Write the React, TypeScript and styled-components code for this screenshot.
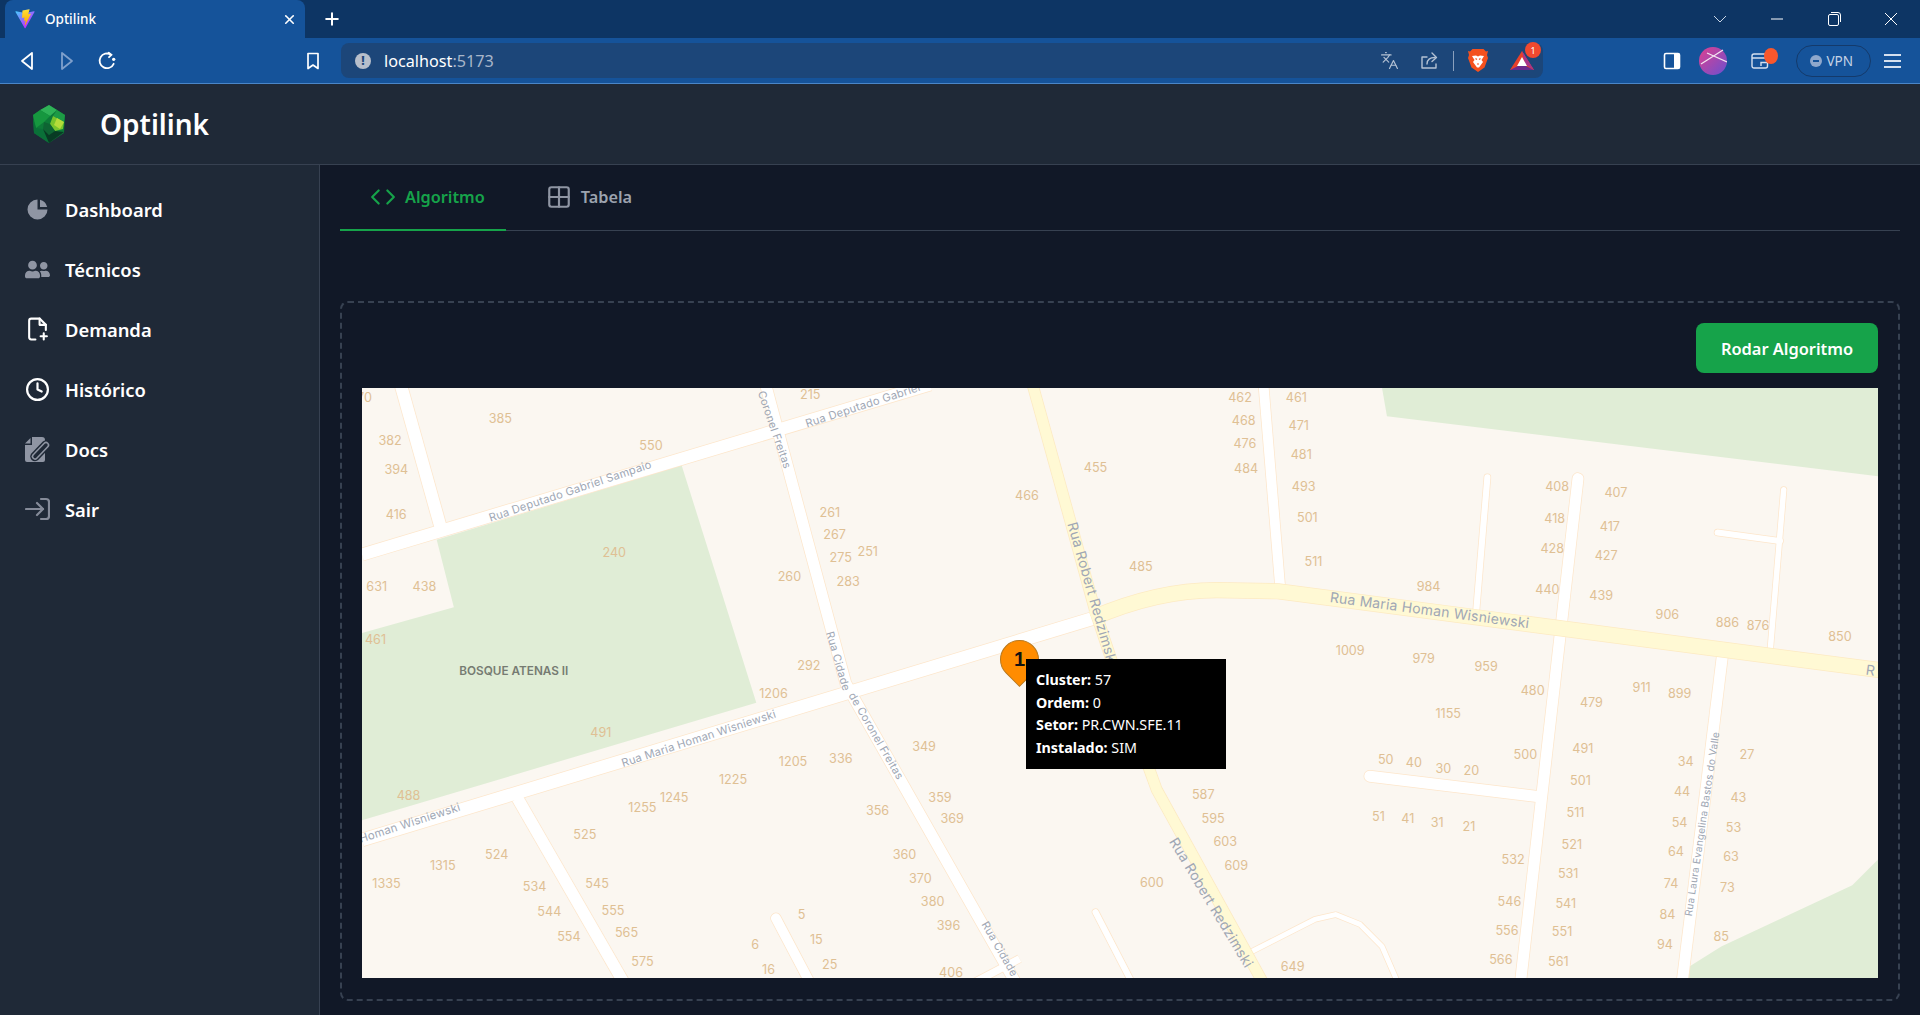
import styled, { createGlobalStyle } from "styled-components";
import { Clock, Code, Grid2x2, Languages, Plus, X } from "lucide-react";
import { FaUserFriends } from "react-icons/fa";
import { HiChartPie } from "react-icons/hi";

const UI_FONT = `"Noto Sans", "Open Sans", "Liberation Sans", sans-serif`;

// map coordinates below are measured on a 1238 x 482 grid
const parks = [
  "357,441 557,380 618,574 296,670 296,517 371,496",
  "1129,317 1133,340 1534,389 1534,317",
  "1534,702 1513,723 1406,773 1379,790 1379,800 1534,800",
];

const whiteRoads = [
  { d: "M296 453 L760 314", w: 10 },
  { d: "M296 686 L900 503", w: 10.5 },
  { d: "M625 312 L691 558 L697 569 L830 803", w: 9 },
  { d: "M327 312 L360 430", w: 10 },
  { d: "M423 652 L510 803", w: 9.5 },
  { d: "M634 750 L662 803", w: 8, round: true },
  { d: "M1032 312 L1046 482", w: 8 },
  { d: "M1215 390 L1206 498", w: 5, round: true },
  { d: "M1289 391 L1242 803", w: 9, round: true },
  { d: "M1457 400 L1446 531", w: 4.5, round: true },
  { d: "M1403 435 L1454 442", w: 5, round: true },
  { d: "M1407 535 L1374 803", w: 9 },
  { d: "M1119 634 L1259 651", w: 9, round: true },
  { d: "M1017 780 L1074 751 L1091 747 L1111 755 L1129 773 L1142 803", w: 4 },
  { d: "M895 745 L925 803", w: 5, round: true },
  { d: "M795 803 L833 783", w: 6 },
];

const yellowRoads = [
  { d: "M843 312 L895 500 L925 590 L945 645 L1032 803", w: 8.5 },
  { d: "M892 505 Q945 482 994 482 L1044 483 L1540 548", w: 12 },
];

const houseNumbers: [string, number, number][] = [
  ["70", 298, 324], ["382", 319, 359], ["385", 409, 341], ["394", 324, 383], ["416", 324, 420],
  ["550", 532, 363], ["215", 662, 322], ["631", 308, 478], ["438", 347, 478], ["240", 502, 451],
  ["461", 307, 522], ["261", 678, 418], ["267", 682, 436], ["275", 687, 455], ["251", 709, 450],
  ["283", 693, 474], ["260", 645, 470], ["292", 661, 543], ["1206", 632, 566], ["466", 839, 404],
  ["455", 895, 381], ["462", 1013, 324], ["461", 1059, 324], ["468", 1016, 343], ["471", 1061, 347],
  ["476", 1017, 362], ["481", 1063, 371], ["484", 1018, 382], ["493", 1065, 397], ["501", 1068, 422],
  ["511", 1073, 458], ["485", 932, 462], ["984", 1167, 478], ["408", 1272, 397], ["407", 1320, 402],
  ["418", 1270, 423], ["417", 1315, 429], ["428", 1268, 447], ["427", 1312, 453], ["440", 1264, 481],
  ["439", 1308, 486], ["906", 1362, 501], ["886", 1411, 508], ["876", 1436, 510], ["850", 1503, 519],
  ["1009", 1103, 531], ["979", 1163, 537], ["959", 1214, 544], ["480", 1252, 563], ["479", 1300, 573],
  ["911", 1341, 561], ["899", 1372, 566], ["1155", 1183, 582], ["349", 755, 609], ["491", 491, 598],
  ["488", 334, 649], ["1205", 648, 621], ["336", 687, 619], ["1225", 599, 636], ["1245", 551, 651],
  ["1255", 525, 659], ["356", 717, 661], ["359", 768, 651], ["369", 778, 668], ["525", 478, 681],
  ["524", 406, 697], ["1315", 362, 706], ["1335", 316, 721], ["534", 437, 723], ["545", 488, 721],
  ["555", 501, 743], ["565", 512, 761], ["544", 449, 744], ["554", 465, 764], ["575", 525, 785],
  ["360", 739, 697], ["370", 752, 717], ["380", 762, 736], ["396", 775, 755], ["406", 777, 794],
  ["5", 655, 746], ["15", 667, 767], ["25", 678, 787], ["6", 617, 771], ["16", 628, 791],
  ["600", 941, 720], ["587", 983, 648], ["595", 991, 668], ["603", 1001, 687], ["609", 1010, 706],
  ["649", 1056, 789], ["50", 1132, 620], ["40", 1155, 622], ["30", 1179, 627], ["20", 1202, 629],
  ["51", 1126, 666], ["41", 1150, 668], ["31", 1174, 671], ["21", 1200, 674], ["500", 1246, 616],
  ["491", 1293, 611], ["501", 1291, 637], ["511", 1287, 663], ["521", 1284, 689], ["531", 1281, 713],
  ["541", 1279, 737], ["551", 1276, 760], ["561", 1273, 785], ["532", 1236, 701], ["546", 1233, 736],
  ["556", 1231, 759], ["566", 1226, 783], ["34", 1377, 621], ["44", 1374, 646], ["54", 1372, 671],
  ["64", 1369, 695], ["74", 1365, 721], ["84", 1362, 746], ["94", 1360, 771], ["27", 1427, 616],
  ["43", 1420, 651], ["53", 1416, 675], ["63", 1414, 699], ["73", 1411, 724], ["85", 1406, 764],
];

const streetNames: [string, number, number, number, number][] = [
  ["Rua Deputado Gabriel Sampaio", 466, 401, -18.5, 9.1],
  ["Rua Deputado Gabriel", 705, 331, -18, 9.1],
  ["Coronel Freitas", 633, 351, 71, 8.9],
  ["Rua Cidade", 685, 540, 74, 8.9],
  ["de Coronel Freitas", 716, 601, 60, 8.9],
  ["Rua Robert Redzimski", 893, 485, 74, 11.4],
  ["Rua Robert Redzimski", 990, 737, 59, 11.4],
  ["Rua Maria Homan Wisniewski", 1168, 498, 7.5, 11.4],
  ["Rua Maria Homan Wisniewski", 571, 603, -18, 9.1],
  ["Homan Wisniewski", 335, 672, -18, 9.3],
  ["Rua Cidade", 817, 775, 60, 8.9],
  ["R", 1528, 547, 8, 11.4],
  ["Rua Laura Evangelina Bastos do Valle", 1390, 673, -81.5, 8.2],
];

const navItems = [
  { label: "Dashboard", icon: <HiChartPie size={29} color="#8f95a3" /> },
  { label: "Técnicos", icon: <FaUserFriends size={27} color="#8f95a3" /> },
  { label: "Demanda", icon: <FilePlusIcon /> },
  { label: "Histórico", icon: <Clock size={27} color="#fff" strokeWidth={2.1} /> },
  { label: "Docs", icon: <DocsIcon /> },
  { label: "Sair", icon: <SignInIcon /> },
];

const tooltipRows = [
  ["Cluster:", "57"],
  ["Ordem:", "0"],
  ["Setor:", "PR.CWN.SFE.11"],
  ["Instalado:", "SIM"],
];

function FilePlusIcon() {
  return (
    <svg width="26" height="26" viewBox="0 0 24 24" fill="none" stroke="#fff" strokeWidth="2" strokeLinecap="round" strokeLinejoin="round">
      <path d="M10 22H6a2 2 0 0 1-2-2V4a2 2 0 0 1 2-2h8l6 6v5" />
      <path d="M14 2v6h6" />
      <path d="M18 16v6M15 19h6" />
    </svg>
  );
}

function DocsIcon() {
  return (
    <svg width="25" height="25" viewBox="0 0 25 25" strokeLinecap="round">
      <path d="M7 0 H17 Q20 0 20 3 V23 Q20 25 18 25 H2 Q0 25 0 23 V8 H7 Z" fill="#8f95a3" />
      <path d="M5.5 1 V6.5 H0 Z" fill="#8f95a3" />
      <path d="M10 19.5 L21 8" stroke="#1f2937" strokeWidth="9.5" />
      <path d="M10 19.5 L21 8" stroke="#8f95a3" strokeWidth="6.5" />
      <path d="M10 19.5 L21 8" stroke="#1f2937" strokeWidth="3.4" />
    </svg>
  );
}

function SignInIcon() {
  return (
    <svg width="25" height="24" viewBox="0 0 25 24" fill="none" stroke="#858b99" strokeWidth="2.2" strokeLinecap="round" strokeLinejoin="round">
      <path d="M1 12 H18" />
      <path d="M12 6 L18 12 L12 18" />
      <path d="M16 2 H21 Q24 2 24 5 V19 Q24 22 21 22 H16" />
    </svg>
  );
}

function ViteIcon() {
  return (
    <svg width="20" height="20" viewBox="0 0 410 404">
      <defs>
        <linearGradient id="viteA" x1="6" y1="33" x2="235" y2="344" gradientUnits="userSpaceOnUse">
          <stop stopColor="#41D1FF" />
          <stop offset="1" stopColor="#BD34FE" />
        </linearGradient>
        <linearGradient id="viteB" x1="194" y1="8" x2="236" y2="292" gradientUnits="userSpaceOnUse">
          <stop stopColor="#FFEA83" />
          <stop offset="0.08" stopColor="#FFDD35" />
          <stop offset="1" stopColor="#FFA800" />
        </linearGradient>
      </defs>
      <path fill="url(#viteA)" d="M399.641 59.5246L215.643 388.545C211.844 395.338 202.084 395.378 198.228 388.618L10.5817 59.5563C6.38087 52.1896 12.6802 43.2665 21.0281 44.7586L205.223 77.6824C206.398 77.8924 207.601 77.8904 208.776 77.6763L389.119 44.8058C397.439 43.2894 403.768 52.1434 399.641 59.5246Z" />
      <path fill="url(#viteB)" d="M292.965 1.5744L156.801 28.2552C154.563 28.6937 152.906 30.5903 152.771 32.8664L144.395 174.33C144.198 177.662 147.258 180.248 150.51 179.498L188.42 170.749C191.967 169.931 195.172 173.055 194.443 176.622L183.18 231.775C182.422 235.487 185.907 238.661 189.532 237.56L212.947 230.446C216.577 229.344 220.065 232.527 219.297 236.242L201.398 322.875C200.278 328.294 207.486 331.249 210.492 326.603L212.5 323.5L323.454 102.072C325.312 98.3645 322.108 94.137 318.036 94.9228L279.014 102.454C275.347 103.161 272.227 99.746 273.262 96.1583L298.731 7.86689C299.767 4.27314 296.636 0.855181 292.965 1.5744Z" />
    </svg>
  );
}

function LogoIcon() {
  return (
    <svg width="32" height="38" viewBox="0 0 32 38">
      <polygon points="16,0 32,10 31,28 16,38 1,28 0,10" fill="#0d7a38" />
      <polygon points="16,0 24,5 17,11 7,5" fill="#2fb257" />
      <polygon points="24,5 32,10 31,17 20,11" fill="#1d9a45" />
      <polygon points="7,5 17,11 11,17 3,23 0,10" fill="#16973f" />
      <polygon points="20,11 31,17 30,24 22,26 17,19" fill="#78c52c" />
      <polygon points="24,13 31,17 27,24 21,20" fill="#b5dc3a" />
      <polygon points="11,17 17,19 22,26 16,30 10,24" fill="#0e6433" />
      <polygon points="0,14 3,23 10,24 16,38 1,28" fill="#0a7038" />
      <polygon points="10,24 16,30 22,26 31,27 16,38" fill="#083b24" />
    </svg>
  );
}

function ArrowIcon({ dim }: { dim?: boolean }) {
  return (
    <svg width="16" height="20" viewBox="0 0 16 20" fill="none" stroke={dim ? "#7fa0cc" : "#fff"} strokeWidth="1.8" strokeLinejoin="round">
      <path d="M13 2 L3 10 L13 18 Z" transform={dim ? "matrix(-1 0 0 1 16 0)" : undefined} />
    </svg>
  );
}

function ReloadIcon() {
  return (
    <svg width="20" height="20" viewBox="0 0 18 18" fill="none" stroke="#fff" strokeWidth="1.6" strokeLinecap="round">
      <path d="M15 11.5 A6.6 6.6 0 1 1 12.5 3.3" />
      <circle cx="15" cy="7.5" r="1.5" fill="#fff" stroke="none" />
      <path d="M10.5 1.5 L13 3.4 L10.8 5.6" />
    </svg>
  );
}

function BookmarkIcon() {
  return (
    <svg width="14" height="18" viewBox="0 0 14 18" fill="none" stroke="#fff" strokeWidth="1.7" strokeLinejoin="round">
      <path d="M2 1.5 H12 V16.5 L7 13 L2 16.5 Z" />
    </svg>
  );
}

function ShareIcon() {
  return (
    <svg width="19" height="19" viewBox="0 0 19 19" fill="none" stroke="#b4c2d4" strokeWidth="1.4" strokeLinecap="round" strokeLinejoin="round">
      <path d="M7 6 H2 V17 H16 V13" />
      <path d="M7 13 C7 8.5 10 6.5 15 6.5" />
      <path d="M12 2 L16.5 6.5 L12 10.5" />
    </svg>
  );
}

function BraveIcon() {
  return (
    <svg width="20" height="23" viewBox="0 0 20 23">
      <path d="M4.5 0 H15.5 L18 2.5 L20 2 L19 6 L20 9 L16.5 18.5 L10 23 L3.5 18.5 L0 9 L1 6 L0 2 L2 2.5 Z" fill="#f4511e" />
      <path d="M4 7 L8 6.5 L10 7.5 L12 6.5 L16 7 L13.5 11 L15 13 L11 18.5 H9 L5 13 L6.5 11 Z" fill="#fff" />
      <path d="M7.5 9.5 L9 10.5 M12.5 9.5 L11 10.5 M9 15 H11" stroke="#f4511e" strokeWidth="1.2" />
    </svg>
  );
}

function BatIcon() {
  return (
    <svg width="24" height="19" viewBox="0 0 24 19">
      <polygon points="12,0 24,19 0,19" fill="#e8402a" />
      <polygon points="24,19 0,19 12,13" fill="#6a2a8c" />
      <polygon points="12,0 24,19 15,13" fill="#a8338a" />
      <polygon points="12,6 17,15 7,15" fill="#fff" />
    </svg>
  );
}

function SidePanelIcon() {
  return (
    <svg width="18" height="18" viewBox="0 0 18 18">
      <rect x="1.5" y="1.5" width="15" height="15" rx="1.5" fill="none" stroke="#fff" strokeWidth="1.6" />
      <rect x="11" y="2" width="5" height="14" fill="#fff" />
    </svg>
  );
}

function AvatarIcon() {
  return (
    <svg width="28" height="34" viewBox="0 0 28 34">
      <defs>
        <linearGradient id="avatarFill" x1="0" y1="0" x2="1" y2="1">
          <stop offset="0" stopColor="#e0408f" />
          <stop offset="1" stopColor="#6a50d0" />
        </linearGradient>
      </defs>
      <ellipse cx="14" cy="17" rx="14" ry="14" fill="url(#avatarFill)" />
      <path d="M2 20 L24 6 M8 9 L28 18" stroke="#f4e4f0" strokeWidth="1.2" />
    </svg>
  );
}

function WalletIcon() {
  return (
    <svg width="18" height="18" viewBox="0 0 18 18" fill="none" stroke="#d5e0ef" strokeWidth="1.4">
      <rect x="1" y="2" width="15.5" height="14" rx="2" />
      <path d="M1 6 H16.5 M10 14 V10.5 H16.5" />
    </svg>
  );
}

function RoadLayer({ roads, casing, fill }: { roads: { d: string; w: number; round?: boolean }[]; casing: string; fill: string }) {
  return (
    <g fill="none" strokeLinejoin="round">
      {roads.map((road) => (
        <path key={road.d} d={road.d} stroke={casing} strokeWidth={road.w + 1.2} strokeLinecap={road.round ? "round" : "butt"} />
      ))}
      {roads.map((road) => (
        <path key={road.d} d={road.d} stroke={fill} strokeWidth={road.w} strokeLinecap={road.round ? "round" : "butt"} />
      ))}
    </g>
  );
}

function App() {
  return (
    <Page>
      <GlobalStyle />
      <TabStrip>
        <BrowserTab>
          <ViteIcon />
          <TabTitle>Optilink</TabTitle>
          <X size={15} color="#fff" strokeWidth={2.6} />
        </BrowserTab>
        <NewTab>
          <Plus size={20} color="#fff" strokeWidth={2.4} />
        </NewTab>
        <WindowControls>
          <WindowButton>
            <svg width="16" height="16" viewBox="0 0 16 16" fill="none" stroke="#c9d6e6"><path d="M2 5 L8 11 L14 5" /></svg>
          </WindowButton>
          <WindowButton>
            <svg width="16" height="16" viewBox="0 0 16 16" fill="none" stroke="#fff"><path d="M2 8 H14" /></svg>
          </WindowButton>
          <WindowButton>
            <svg width="16" height="16" viewBox="0 0 16 16" fill="none" stroke="#fff"><rect x="2.5" y="3.5" width="10" height="11" rx="1.5" /><path d="M5 1.5 H12 Q14.5 1.5 14.5 4 V11" /></svg>
          </WindowButton>
          <WindowButton>
            <svg width="16" height="16" viewBox="0 0 16 16" fill="none" stroke="#fff"><path d="M2 2 L14 14 M14 2 L2 14" /></svg>
          </WindowButton>
        </WindowControls>
      </TabStrip>

      <Toolbar>
        <ToolSlot><ArrowIcon /></ToolSlot>
        <ToolSlot><ArrowIcon dim /></ToolSlot>
        <ToolSlot><ReloadIcon /></ToolSlot>
        <BookmarkSlot><BookmarkIcon /></BookmarkSlot>
        <Omnibox>
          <InfoDot>!</InfoDot>
          <Url>localhost<UrlPort>:5173</UrlPort></Url>
          <OmniActions>
            <TranslateIcon size={19} color="#b4c2d4" strokeWidth={1.5} />
            <ShareIcon />
            <OmniDivider />
            <BraveIcon />
            <BadgeHolder $offset={8}>
              <BatIcon />
              <CountBadge>1</CountBadge>
            </BadgeHolder>
          </OmniActions>
        </Omnibox>
        <ToolActions>
          <SidePanelIcon />
          <AvatarIcon />
          <BadgeHolder $offset={6}>
            <WalletIcon />
            <WalletDot />
          </BadgeHolder>
          <VpnPill><VpnDot />VPN</VpnPill>
          <Hamburger><span /><span /><span /></Hamburger>
        </ToolActions>
      </Toolbar>

      <AppHeader>
        <LogoIcon />
        <Brand>Optilink</Brand>
      </AppHeader>

      <Body>
        <Sidebar>
          {navItems.map((item) => (
            <NavItem key={item.label}>
              <NavIcon>{item.icon}</NavIcon>
              {item.label}
            </NavItem>
          ))}
        </Sidebar>

        <Main>
          <Tabs>
            <Tab $active>
              <Code size={26} strokeWidth={2} />
              Algoritmo
            </Tab>
            <Tab>
              <Grid2x2 size={26} strokeWidth={2} color="#8f95a3" />
              Tabela
            </Tab>
          </Tabs>

          <DashedBox>
            <ButtonRow>
              <RunButton>Rodar Algoritmo</RunButton>
            </ButtonRow>
            <MapFrame>
              <MapSvg viewBox="296 317 1238 481.8">
                <rect x="296" y="317" width="1238" height="482" fill="#fbf7f1" />
                {parks.map((points) => (
                  <polygon key={points} points={points} fill="#e0edd6" />
                ))}
                <RoadLayer roads={whiteRoads} casing="#fde6cb" fill="#ffffff" />
                <RoadLayer roads={yellowRoads} casing="#fdeac2" fill="#fff9d4" />
                {houseNumbers.map(([text, x, y]) => (
                  <HouseNumber key={`${text}-${x}`} x={x} y={y + 0.7}>{text}</HouseNumber>
                ))}
                {streetNames.map(([text, x, y, angle, size]) => (
                  <StreetName key={`${text}-${x}`} x={x} y={y} $size={size} transform={`rotate(${angle} ${x} ${y})`}>{text}</StreetName>
                ))}
                <ParkName x={420} y={548.5}>BOSQUE ATENAS II</ParkName>
              </MapSvg>
              <Marker><MarkerNumber>1</MarkerNumber></Marker>
              <Tooltip>
                {tooltipRows.map(([name, value]) => (
                  <TooltipRow key={name}><b>{name}</b> {value}</TooltipRow>
                ))}
              </Tooltip>
            </MapFrame>
          </DashedBox>
        </Main>
      </Body>
    </Page>
  );
}

export default App;

const GlobalStyle = createGlobalStyle`
  html, body {
    margin: 0;
    padding: 0;
    background: #111827;
  }
  * {
    box-sizing: border-box;
  }
`;

const Page = styled.div`
  display: flex;
  flex-direction: column;
  height: 1015px;
  overflow: hidden;
  font-family: ${UI_FONT};
  color: #fff;
`;

const TabStrip = styled.div`
  display: flex;
  align-items: flex-end;
  height: 38px;
  padding-left: 5px;
  background: #0d3564;
`;

const BrowserTab = styled.div`
  display: flex;
  align-items: center;
  width: 300px;
  height: 38px;
  padding: 0 8px 0 10px;
  border-radius: 8px 8px 0 0;
  background: #15539a;
`;

const TabTitle = styled.span`
  flex: 1;
  margin-left: 10px;
  font-size: 13.5px;
  font-weight: 500;
`;

const NewTab = styled.div`
  display: flex;
  align-items: center;
  justify-content: center;
  width: 54px;
  height: 38px;
`;

const WindowControls = styled.div`
  display: flex;
  margin-left: auto;
`;

const WindowButton = styled.div`
  display: flex;
  align-items: center;
  justify-content: center;
  width: 57.25px;
  height: 38px;
`;

const Toolbar = styled.div`
  display: flex;
  align-items: center;
  height: 46px;
  padding-left: 7px;
  border-bottom: 1px solid #4a86c8;
  background: #15539a;
`;

const ToolSlot = styled.div`
  display: flex;
  align-items: center;
  justify-content: center;
  width: 40px;
`;

const BookmarkSlot = styled(ToolSlot)`
  margin-left: 166px;
`;

const Omnibox = styled.div`
  display: flex;
  align-items: center;
  width: 1202px;
  height: 35px;
  margin-left: 8px;
  padding: 0 9px 0 14px;
  border-radius: 8px;
  background: #1c4679;
`;

const InfoDot = styled.div`
  display: flex;
  align-items: center;
  justify-content: center;
  width: 16px;
  height: 16px;
  border-radius: 50%;
  background: #b7bfcb;
  color: #1c4679;
  font-size: 12px;
  font-weight: 800;
`;

const Url = styled.span`
  margin-left: 13px;
  font-size: 16.2px;
  color: #fff;
`;

const UrlPort = styled.span`
  color: #a7b5c9;
`;

const OmniActions = styled.div`
  display: flex;
  align-items: center;
  gap: 14px;
  margin-left: auto;
`;

const TranslateIcon = styled(Languages)`
  margin-right: 7px;
`;

const OmniDivider = styled.div`
  width: 1px;
  height: 20px;
  background: #8aa0bd;
`;

const BadgeHolder = styled.div<{ $offset: number }>`
  position: relative;
  display: flex;
  margin-left: ${(props) => props.$offset}px;
`;

const CountBadge = styled.div`
  position: absolute;
  top: -9px;
  right: -7px;
  display: flex;
  align-items: center;
  justify-content: center;
  width: 16px;
  height: 16px;
  border-radius: 50%;
  background: #f0492f;
  color: #fff;
  font-size: 9px;
`;

const WalletDot = styled.div`
  position: absolute;
  top: -4px;
  right: -9px;
  width: 14px;
  height: 16px;
  border-radius: 50%;
  background: #f9572c;
`;

const ToolActions = styled.div`
  display: flex;
  align-items: center;
  gap: 18px;
  margin-left: 120px;
`;

const VpnPill = styled.div`
  display: flex;
  align-items: center;
  gap: 5px;
  width: 75px;
  height: 32px;
  margin-left: 8.5px;
  padding-left: 13px;
  border: 1px solid #143a6b;
  border-radius: 16px;
  color: #c6d3e6;
  font-size: 13.5px;
`;

const VpnDot = styled.div`
  position: relative;
  width: 12px;
  height: 12px;
  border-radius: 50%;
  background: #8fa8cc;

  &::after {
    content: "";
    position: absolute;
    top: 5px;
    left: 3px;
    width: 6px;
    height: 2px;
    background: #15539a;
  }
`;

const Hamburger = styled.div`
  display: flex;
  flex-direction: column;
  gap: 4px;
  margin-left: -4.5px;

  span {
    display: block;
    width: 17px;
    height: 2px;
    background: #d5e0ef;
  }
`;

const AppHeader = styled.header`
  display: flex;
  align-items: center;
  flex-shrink: 0;
  height: 81px;
  padding-left: 33px;
  border-bottom: 1px solid #374151;
  background: #1f2937;
`;

const Brand = styled.div`
  margin-left: 35px;
  font-size: 28px;
  font-weight: 600;
`;

const Body = styled.div`
  display: flex;
  flex: 1;
  min-height: 0;
`;

const Sidebar = styled.nav`
  flex-shrink: 0;
  width: 320px;
  padding-top: 14px;
  border-right: 1px solid #374151;
  background: #1f2937;
`;

const NavItem = styled.div`
  display: flex;
  align-items: center;
  gap: 15px;
  height: 60px;
  padding-left: 25px;
  font-size: 18.4px;
  font-weight: 600;
  color: #fff;
`;

const NavIcon = styled.span`
  display: flex;
  align-items: center;
  justify-content: center;
  width: 25px;
`;

const Main = styled.main`
  display: flex;
  flex: 1;
  flex-direction: column;
  min-width: 0;
  padding: 0 20px 14px 20px;
  background: #111827;
`;

const Tabs = styled.div`
  display: flex;
  gap: 10px;
  height: 66px;
  border-bottom: 1px solid #374151;
`;

const Tab = styled.div<{ $active?: boolean }>`
  display: flex;
  align-items: center;
  gap: 9px;
  height: 66px;
  padding: 0 21px 0 30px;
  border-bottom: 2px solid ${(props) => (props.$active ? "#16a34a" : "transparent")};
  color: ${(props) => (props.$active ? "#16a34a" : "#9ca3af")};
  font-size: 16.3px;
  font-weight: 600;
`;

const DashedBox = styled.section`
  flex: 1;
  margin-top: 70px;
  padding: 20px;
  border: 2px dashed #374151;
  border-radius: 8px;
`;

const ButtonRow = styled.div`
  display: flex;
  justify-content: flex-end;
`;

const RunButton = styled.button`
  width: 182px;
  height: 50px;
  border: none;
  border-radius: 8px;
  background: #16a34a;
  color: #fff;
  font-family: ${UI_FONT};
  font-size: 16.4px;
  font-weight: 600;
`;

const MapFrame = styled.div`
  position: relative;
  height: 590px;
  margin-top: 15px;
`;

const MapSvg = styled.svg`
  display: block;
  width: 100%;
  height: 100%;
`;

const HouseNumber = styled.text`
  fill: #dfc094;
  font-family: Inter, "Liberation Sans", sans-serif;
  font-size: 10.3px;
  text-anchor: middle;
  dominant-baseline: central;
`;

const StreetName = styled.text<{ $size: number }>`
  fill: #a0a7b4;
  font-family: Inter, "Liberation Sans", sans-serif;
  font-size: ${(props) => props.$size}px;
  letter-spacing: 0.2px;
  text-anchor: middle;
  dominant-baseline: central;
`;

const ParkName = styled.text`
  fill: #767b72;
  font-family: Inter, "Liberation Sans", sans-serif;
  font-size: 9.6px;
  font-weight: 600;
  text-anchor: middle;
  dominant-baseline: central;
`;

const Marker = styled.div`
  position: absolute;
  top: 252px;
  left: 638px;
  display: flex;
  align-items: center;
  justify-content: center;
  width: 39px;
  height: 39px;
  border: 1px solid #b8791f;
  border-radius: 50% 50% 0 50%;
  background: #ff8c00;
  transform: rotate(45deg);
`;

const MarkerNumber = styled.span`
  color: #111;
  font-family: "Liberation Sans", sans-serif;
  font-size: 20px;
  font-weight: 700;
  transform: rotate(-45deg);
`;

const Tooltip = styled.div`
  position: absolute;
  top: 271px;
  left: 664px;
  width: 200px;
  height: 110px;
  padding: 10px;
  background: #000;
  color: #fff;
  font-size: 14.3px;
`;

const TooltipRow = styled.div`
  height: 22.5px;
  line-height: 22.5px;
  white-space: nowrap;

  b {
    font-weight: 700;
  }
`;
